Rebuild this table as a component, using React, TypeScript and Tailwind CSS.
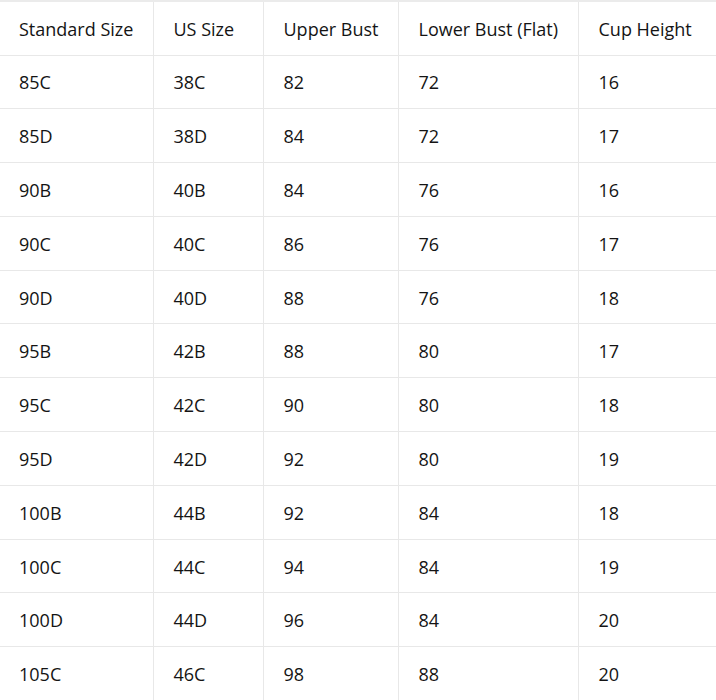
const headers = ['Standard Size', 'US Size', 'Upper Bust', 'Lower Bust (Flat)', 'Cup Height'];

const rows: string[][] = [
  ['85C', '38C', '82', '72', '16'],
  ['85D', '38D', '84', '72', '17'],
  ['90B', '40B', '84', '76', '16'],
  ['90C', '40C', '86', '76', '17'],
  ['90D', '40D', '88', '76', '18'],
  ['95B', '42B', '88', '80', '17'],
  ['95C', '42C', '90', '80', '18'],
  ['95D', '42D', '92', '80', '19'],
  ['100B', '44B', '92', '84', '18'],
  ['100C', '44C', '94', '84', '19'],
  ['100D', '44D', '96', '84', '20'],
  ['105C', '46C', '98', '88', '20'],
];

const widths = ['w-[153px]', 'w-[110px]', 'w-[135px]', 'w-[180px]', 'w-[138px]'];

export default function App() {
  return (
    <div className="w-[716px] h-[700px] overflow-hidden bg-white text-[#141414] font-['Open_Sans','Noto_Sans',sans-serif]">
      <table className="w-[716px] table-fixed border-collapse border-t-2 border-[#ebebeb] text-[18px]">
        <thead>
          <tr className="h-[54px] border-b border-[#e8e8e8]">
            {headers.map((h, i) => (
              <th
                key={h}
                className={`${widths[i]} pt-[2px] text-left font-normal ${i > 0 ? 'border-l border-[#e8e8e8] pl-[20px]' : 'pl-[19px]'}`}
              >
                {h}
              </th>
            ))}
          </tr>
        </thead>
        <tbody>
          {rows.map((r) => (
            <tr key={r[0]} className="h-[53.8px] border-b border-[#e8e8e8]">
              {r.map((c, i) => (
                <td
                  key={i}
                  className={`pt-[2px] ${i > 0 ? 'border-l border-[#e8e8e8] pl-[20px]' : 'pl-[19px]'}`}
                >
                  {c}
                </td>
              ))}
            </tr>
          ))}
        </tbody>
      </table>
    </div>
  );
}
